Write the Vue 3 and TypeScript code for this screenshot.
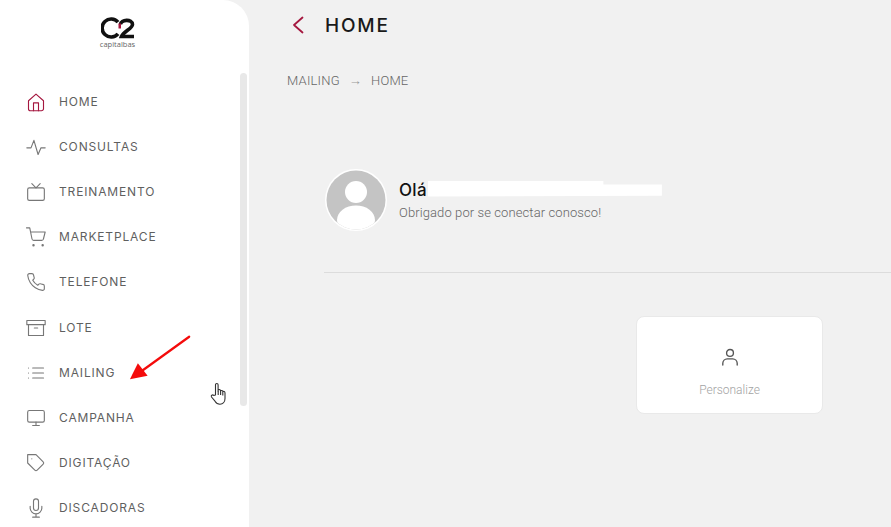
<script setup lang="ts">
const menu = [
  { label: "HOME", icon: "home", active: true },
  { label: "CONSULTAS", icon: "activity" },
  { label: "TREINAMENTO", icon: "tv" },
  { label: "MARKETPLACE", icon: "cart" },
  { label: "TELEFONE", icon: "phone" },
  { label: "LOTE", icon: "archive" },
  { label: "MAILING", icon: "list" },
  { label: "CAMPANHA", icon: "monitor" },
  { label: "DIGITAÇÃO", icon: "tag" },
  { label: "DISCADORAS", icon: "mic" },
];
</script>

<template>
  <div class="page">
    <aside class="sidebar">
      <div class="logo">
        <svg class="logo-mark" viewBox="0 0 34 22">
          <path d="M17 5.200A9 9 0 1 0 17 16.800" />
          <path d="M19.500 7.500C19.500 2.500 31.500 1.500 31.500 7.500 31.500 11.500 22.500 14.500 20.500 19.500H33" />
          <rect class="logo-dot" x="17.500" y="6.500" width="2.500" height="5" />
        </svg>
        <div class="logo-sub">capitalbas</div>
      </div>
      <nav class="menu">
        <a
          v-for="item in menu"
          :key="item.label"
          class="menu-item"
          :class="{ active: item.active }"
        >
          <svg class="menu-icon" viewBox="0 0 24 24">
            <template v-if="item.icon === 'home'">
              <path d="M3 10.5 12 2.5l9 8V20a2.5 2.5 0 0 1-2.5 2.500h-13A2.500 2.500 0 0 1 3 20z" />
              <path d="M9 22.500V13h6v9.500" />
            </template>
            <path v-else-if="item.icon === 'activity'" d="M1 13h5l3.500-9 5 17 3.500-8h5" />
            <template v-else-if="item.icon === 'tv'">
              <rect x="2" y="7" width="20" height="15" rx="2" />
              <path d="m17 2-5 5-5-5" />
            </template>
            <template v-else-if="item.icon === 'cart'">
              <circle cx="9" cy="22" r="0.8" />
              <circle cx="20" cy="22" r="0.8" />
              <path d="M0.500 1h4l2.700 13.400a2 2 0 0 0 2 1.600h9.700a2 2 0 0 0 2-1.600L23 6H6" />
            </template>
            <path
              v-else-if="item.icon === 'phone'"
              d="M22 17v3a2 2 0 0 1-2.200 2 19.800 19.800 0 0 1-8.600-3.100 19.500 19.500 0 0 1-6-6A19.800 19.800 0 0 1 2.100 4.200 2 2 0 0 1 4.100 2h3a2 2 0 0 1 2 1.700c.1 1 .4 1.900.7 2.800a2 2 0 0 1-.5 2.100L8.100 9.900a16 16 0 0 0 6 6l1.300-1.300a2 2 0 0 1 2.100-.4c.9.300 1.800.6 2.800.7A2 2 0 0 1 22 17z"
            />
            <template v-else-if="item.icon === 'archive'">
              <path d="M21 8v13H3V8" />
              <rect x="1" y="3" width="22" height="5" />
              <path d="M10 12h4" />
            </template>
            <path v-else-if="item.icon === 'list'" d="M8 6h13M8 12h13M8 18h13M3 6h.01M3 12h.01M3 18h.01" />
            <template v-else-if="item.icon === 'monitor'">
              <rect x="2" y="3" width="20" height="14" rx="2" />
              <path d="M8 21h8M12 17v4" />
            </template>
            <template v-else-if="item.icon === 'tag'">
              <path d="M20.600 13.400 13.400 20.600a2 2 0 0 1-2.800 0L2 12V2h10l8.600 8.600a2 2 0 0 1 0 2.800z" />
              <path d="M7 7h.01" />
            </template>
            <template v-else-if="item.icon === 'mic'">
              <path d="M12 1a3 3 0 0 0-3 3v8a3 3 0 0 0 6 0V4a3 3 0 0 0-3-3z" />
              <path d="M19 10v2a7 7 0 0 1-14 0v-2M12 19v4M8 23h8" />
            </template>
          </svg>
          <span>{{ item.label }}</span>
        </a>
      </nav>
      <div class="scrollbar"></div>
      <svg class="arrow" viewBox="0 0 70 52">
        <path d="M68 2 14 41" />
        <path class="arrow-head" d="M1 50 10 32 21 46z" />
      </svg>
      <svg class="cursor" viewBox="0 0 18 24">
        <path d="M5.500 13V2.800a1.300 1.300 0 0 1 2.600 0V9l.3-1.300c1.300-.4 2 .1 2.200 1 .9-.5 1.900-.2 2.100.8 1-.4 2.300-.1 2.300 1.400v5.600c0 3.500-2.200 5.700-5 5.700-2.500 0-3.800-1-5-3L1.500 15c-.8-1.400.9-2.800 2.200-1.600z" />
        <path d="M8.200 9v4M10.600 9v4M12.800 10v3.500" />
      </svg>
    </aside>

    <main class="content">
      <header class="topbar">
        <svg class="back" viewBox="0 0 12 18">
          <path d="M10.500 1.500 2 9l8.500 7.500" />
        </svg>
        <h1>HOME</h1>
      </header>
      <div class="crumbs">
        <span>MAILING</span>
        <span class="crumb-arrow">→</span>
        <span>HOME</span>
      </div>

      <section class="welcome">
        <div class="profile">
          <svg class="avatar" viewBox="0 0 62 62">
            <defs>
              <clipPath id="avatar-clip"><circle cx="31" cy="31" r="29.500" /></clipPath>
            </defs>
            <circle cx="31" cy="31" r="31" fill="#fff" />
            <circle cx="31" cy="31" r="29.500" fill="#c4c4c4" />
            <g clip-path="url(#avatar-clip)" fill="#fff">
              <circle cx="31" cy="23" r="11" />
              <ellipse cx="31" cy="51" rx="19" ry="14.500" />
            </g>
          </svg>
          <div class="greeting">
            <div class="hello">
              <span>Olá</span>
              <span class="hidden-name"></span>
            </div>
            <p>Obrigado por se conectar conosco!</p>
          </div>
        </div>
        <hr />
        <div class="cards">
          <div class="card">
            <svg class="card-icon" viewBox="0 0 20 20">
              <circle cx="10" cy="5.500" r="3.800" />
              <path d="M2 19v-2a5 5 0 0 1 5-5h6a5 5 0 0 1 5 5v2" />
            </svg>
            <span>Personalize</span>
          </div>
        </div>
      </section>
    </main>
  </div>
</template>

<style>
html,
body {
  margin: 0;
  overflow: hidden;
}
</style>

<style scoped>
.page {
  display: flex;
  width: 891px;
  height: 527px;
  overflow: hidden;
  background: #f1f1f1;
  font-family: Roboto, "Liberation Sans", sans-serif;
}

.sidebar {
  position: relative;
  flex: 0 0 249px;
  height: 100%;
  box-sizing: border-box;
  padding-top: 17px;
  background: #fff;
  border-top-right-radius: 26px;
  overflow: hidden;
}

.logo {
  display: flex;
  flex-direction: column;
  align-items: center;
  width: 235px;
  height: 62px;
}

.logo-mark {
  width: 34px;
  height: 22px;
  fill: none;
  stroke: #111;
  stroke-width: 3.600;
}

.logo-dot {
  fill: #a5173f;
  stroke: none;
}

.logo-sub {
  margin-top: 1px;
  font: 400 7.5px/8px "Open Sans", sans-serif;
  color: #666;
}

.menu {
  display: flex;
  flex-direction: column;
  padding: 0 0 0 26px;
}

.menu-item {
  display: flex;
  align-items: center;
  gap: 13px;
  height: 45.2px;
  color: #5f5f5f;
  font: 400 12px/1 "Inter", sans-serif;
  letter-spacing: 0.85px;
}

.menu-icon {
  flex: none;
  width: 20px;
  height: 20px;
  fill: none;
  stroke: #777;
  stroke-width: 1.350;
  stroke-linecap: round;
  stroke-linejoin: round;
}

.active .menu-icon {
  stroke: #a5173f;
}

.scrollbar {
  position: absolute;
  top: 73px;
  left: 240px;
  width: 7px;
  height: 333px;
  border-radius: 4px;
  background: #e8e8e8;
}

.arrow {
  position: absolute;
  top: 335px;
  left: 129px;
  width: 62px;
  height: 46px;
  fill: none;
  stroke: #f40b0b;
  stroke-width: 2.500;
  stroke-linecap: round;
}

.arrow-head {
  fill: #f40b0b;
  stroke: none;
}

.cursor {
  position: absolute;
  top: 382px;
  left: 210px;
  width: 18px;
  height: 24px;
  fill: #fff;
  stroke: #333;
  stroke-width: 1.100;
  stroke-linejoin: round;
}

.content {
  flex: 1;
  min-width: 0;
  padding-left: 38px;
}

.topbar {
  display: flex;
  align-items: center;
  gap: 21px;
  height: 50px;
  padding-left: 5px;
}

.back {
  width: 12px;
  height: 18px;
  fill: none;
  stroke: #a5173f;
  stroke-width: 1.800;
  stroke-linecap: round;
  stroke-linejoin: round;
}

.topbar h1 {
  margin: 0;
  font: 500 19px/1 "Inter", sans-serif;
  letter-spacing: 1.800px;
  color: #1a1a1a;
}

.crumbs {
  display: flex;
  gap: 9px;
  margin-top: 23px;
  font-size: 13px;
  font-weight: 300;
  letter-spacing: 0.2px;
  line-height: 16px;
  color: #666;
}

.crumb-arrow {
  color: #999;
}

.welcome {
  margin-top: 80px;
  padding-left: 37px;
}

.profile {
  display: flex;
  align-items: center;
  gap: 12px;
  padding-left: 1px;
}

.avatar {
  width: 62px;
  height: 62px;
  flex: none;
}

.greeting p {
  margin: 7px 0 0;
  font-size: 13px;
  font-weight: 300;
  letter-spacing: 0.1px;
  line-height: 14px;
  color: #666;
}

.hello {
  display: flex;
  align-items: flex-start;
  gap: 1px;
  font: 500 17px/18px "Inter", sans-serif;
  letter-spacing: 0.3px;
  color: #111;
}

.hidden-name {
  width: 234px;
  height: 16px;
  background: #fff;
  clip-path: polygon(0 0, 75% 0, 75% 25%, 100% 25%, 100% 95%, 0 100%);
}

hr {
  height: 1px;
  margin: 41px 0 0;
  border: 0;
  background: #dcdcdc;
}

.cards {
  display: flex;
  padding: 43px 0 0 312px;
}

.card {
  display: flex;
  flex-direction: column;
  align-items: center;
  box-sizing: border-box;
  width: 187px;
  height: 98px;
  padding-top: 31px;
  background: #fff;
  border: 1px solid #e9e9e9;
  border-radius: 8px;
  font-size: 12px;
  font-weight: 300;
  color: #a3a3a3;
}

.card-icon {
  width: 18px;
  height: 18px;
  margin-bottom: 17px;
  fill: none;
  stroke: #555;
  stroke-width: 1.500;
  stroke-linecap: round;
}
</style>
